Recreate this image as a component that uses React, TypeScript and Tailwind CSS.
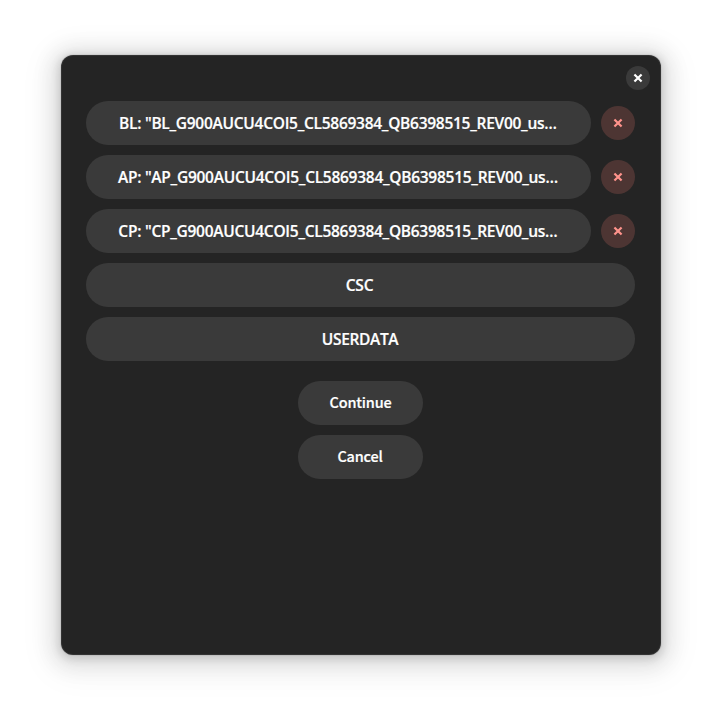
const files = [
  'BL: "BL_G900AUCU4COI5_CL5869384_QB6398515_REV00_us',
  'AP: "AP_G900AUCU4COI5_CL5869384_QB6398515_REV00_us',
  'CP: "CP_G900AUCU4COI5_CL5869384_QB6398515_REV00_us',
];

function Cross() {
  return (
    <svg width="10" height="10" viewBox="0 0 10 10" fill="none" stroke="currentColor" strokeWidth="2.2" strokeLinecap="square">
      <path d="M2.2 2.2 L7.8 7.8 M7.8 2.2 L2.2 7.8" />
    </svg>
  );
}

const pill = 'flex h-11 items-center justify-center rounded-full bg-[#3a3a3a] whitespace-nowrap';
const action = pill + " w-[125px] pb-[3px] font-['Noto_Sans_CJK_SC',sans-serif] text-[14.5px] font-medium tracking-[-0.2px]";

export default function App() {
  return (
    <div className="h-[722px] w-[722px] overflow-hidden bg-white px-[61px] pt-[55px] font-['Open_Sans',sans-serif] text-[15.5px] font-semibold text-white [-webkit-text-stroke:0.2px_white]">
      <div className="flex h-[600px] w-[600px] flex-col rounded-xl bg-[#242424] px-[25px] pt-[11px] shadow-[0_2px_8px_2px_rgba(0,0,0,0.13),0_3px_20px_10px_rgba(0,0,0,0.09),0_6px_32px_16px_rgba(0,0,0,0.04),0_0_0_1px_rgba(0,0,0,0.05),inset_0_0_0_1px_rgba(255,255,255,0.07)]">
        <button className="-mr-[14px] flex size-6 items-center justify-center self-end rounded-full bg-[#3a3a3a]">
          <Cross />
        </button>
        <div className="mt-[11px] flex w-[549px] flex-col gap-[10px]">
          {files.map((name) => (
            <div key={name} className="flex items-center gap-[10px]">
              <button className={pill + ' w-[505px] pt-px pr-px tracking-[-0.27px]'}>
                <span>
                  {name}
                  <span className="tracking-normal">…</span>
                </span>
              </button>
              <button className="flex size-[34px] items-center justify-center rounded-full bg-[#4d3533] text-[#ff938c]">
                <Cross />
              </button>
            </div>
          ))}
          <button className={pill + ' pt-px pr-[2px] tracking-[-0.24px]'}>CSC</button>
          <button className={pill + ' pt-px pr-px tracking-[-0.35px]'}>USERDATA</button>
        </div>
        <div className="mt-5 flex w-[549px] flex-col items-center gap-[10px]">
          <button className={action}>Continue</button>
          <button className={action + ' pr-px'}>Cancel</button>
        </div>
      </div>
    </div>
  );
}
